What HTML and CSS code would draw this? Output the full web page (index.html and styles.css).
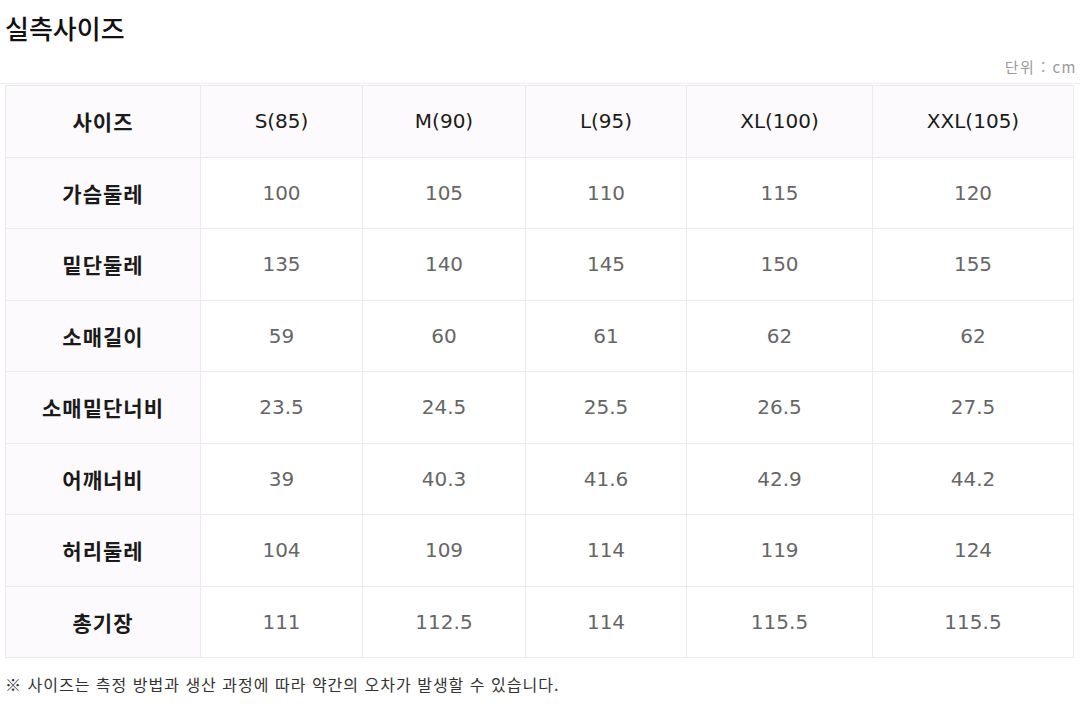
FILE: index.html
```html
<!DOCTYPE html>
<html lang="ko">
<head>
<meta charset="utf-8">
<title>실측사이즈</title>
<link rel="stylesheet" href="styles.css">
</head>
<body>
<h1 class="title">실측사이즈</h1>
<div class="unit">단위 : cm</div>
<div class="table-wrap">
<table class="size-table">
<colgroup>
<col class="c0"><col class="c1"><col class="c2"><col class="c3"><col class="c4"><col class="c5">
</colgroup>
<thead>
<tr><th class="label">사이즈</th><th>S(85)</th><th>M(90)</th><th>L(95)</th><th>XL(100)</th><th>XXL(105)</th></tr>
</thead>
<tbody>
<tr><th class="label">가슴둘레</th><td>100</td><td>105</td><td>110</td><td>115</td><td>120</td></tr>
<tr><th class="label">밑단둘레</th><td>135</td><td>140</td><td>145</td><td>150</td><td>155</td></tr>
<tr><th class="label">소매길이</th><td>59</td><td>60</td><td>61</td><td>62</td><td>62</td></tr>
<tr><th class="label">소매밑단너비</th><td>23.5</td><td>24.5</td><td>25.5</td><td>26.5</td><td>27.5</td></tr>
<tr><th class="label">어깨너비</th><td>39</td><td>40.3</td><td>41.6</td><td>42.9</td><td>44.2</td></tr>
<tr><th class="label">허리둘레</th><td>104</td><td>109</td><td>114</td><td>119</td><td>124</td></tr>
<tr><th class="label">총기장</th><td>111</td><td>112.5</td><td>114</td><td>115.5</td><td>115.5</td></tr>
</tbody>
</table>
</div>
<p class="note">※ 사이즈는 측정 방법과 생산 과정에 따라 약간의 오차가 발생할 수 있습니다.</p>
</body>
</html>
```
FILE: styles.css
```css
html, body {
  margin: 0;
  padding: 0;
  background: #ffffff;
  font-family: "DejaVu Sans", "Noto Sans CJK KR", sans-serif;
  color: #222222;
}

.title {
  margin: 0;
  padding: 12px 5px 0;
  font-family: "Noto Sans CJK KR", sans-serif;
  font-size: 26px;
  line-height: 32px;
  font-weight: 500;
  color: #111111;
}

.unit {
  margin-top: 13px;
  padding-right: 3px;
  text-align: right;
  font-family: "Noto Sans CJK KR", sans-serif;
  font-size: 15px;
  line-height: 20px;
  letter-spacing: 1.5px;
  color: #9a9a9a;
}

.table-wrap {
  margin-top: 6px;
  border-top: 1px solid #efefef;
  padding: 1px 3px 0 5px;
}

.size-table {
  width: 1068px;
  border-collapse: collapse;
  table-layout: fixed;
  border: 1px solid #ececec;
}

.c0 { width: 195px; }
.c1 { width: 162px; }
.c2 { width: 163px; }
.c3 { width: 161px; }
.c4 { width: 186px; }
.c5 { width: 201px; }

.size-table tr {
  height: 71.5px;
}

.size-table th,
.size-table td {
  border: 1px solid #ebebeb;
  text-align: center;
  vertical-align: middle;
  font-size: 20px;
  padding: 0;
}

.size-table thead th {
  background: #fdfafd;
  font-weight: normal;
  color: #1a1a1a;
}

.size-table th.label {
  background: #fdfafd;
  font-family: "Noto Sans CJK KR", sans-serif;
  font-size: 21px;
  letter-spacing: 1px;
  font-weight: 700;
  color: #1a1a1a;
}

.size-table td {
  color: #666666;
  background: #ffffff;
}

.note {
  margin: 15px 0 0;
  padding-left: 5px;
  font-family: "Noto Sans CJK KR", sans-serif;
  font-size: 16px;
  line-height: 22px;
  letter-spacing: 1px;
  color: #333333;
}
```
